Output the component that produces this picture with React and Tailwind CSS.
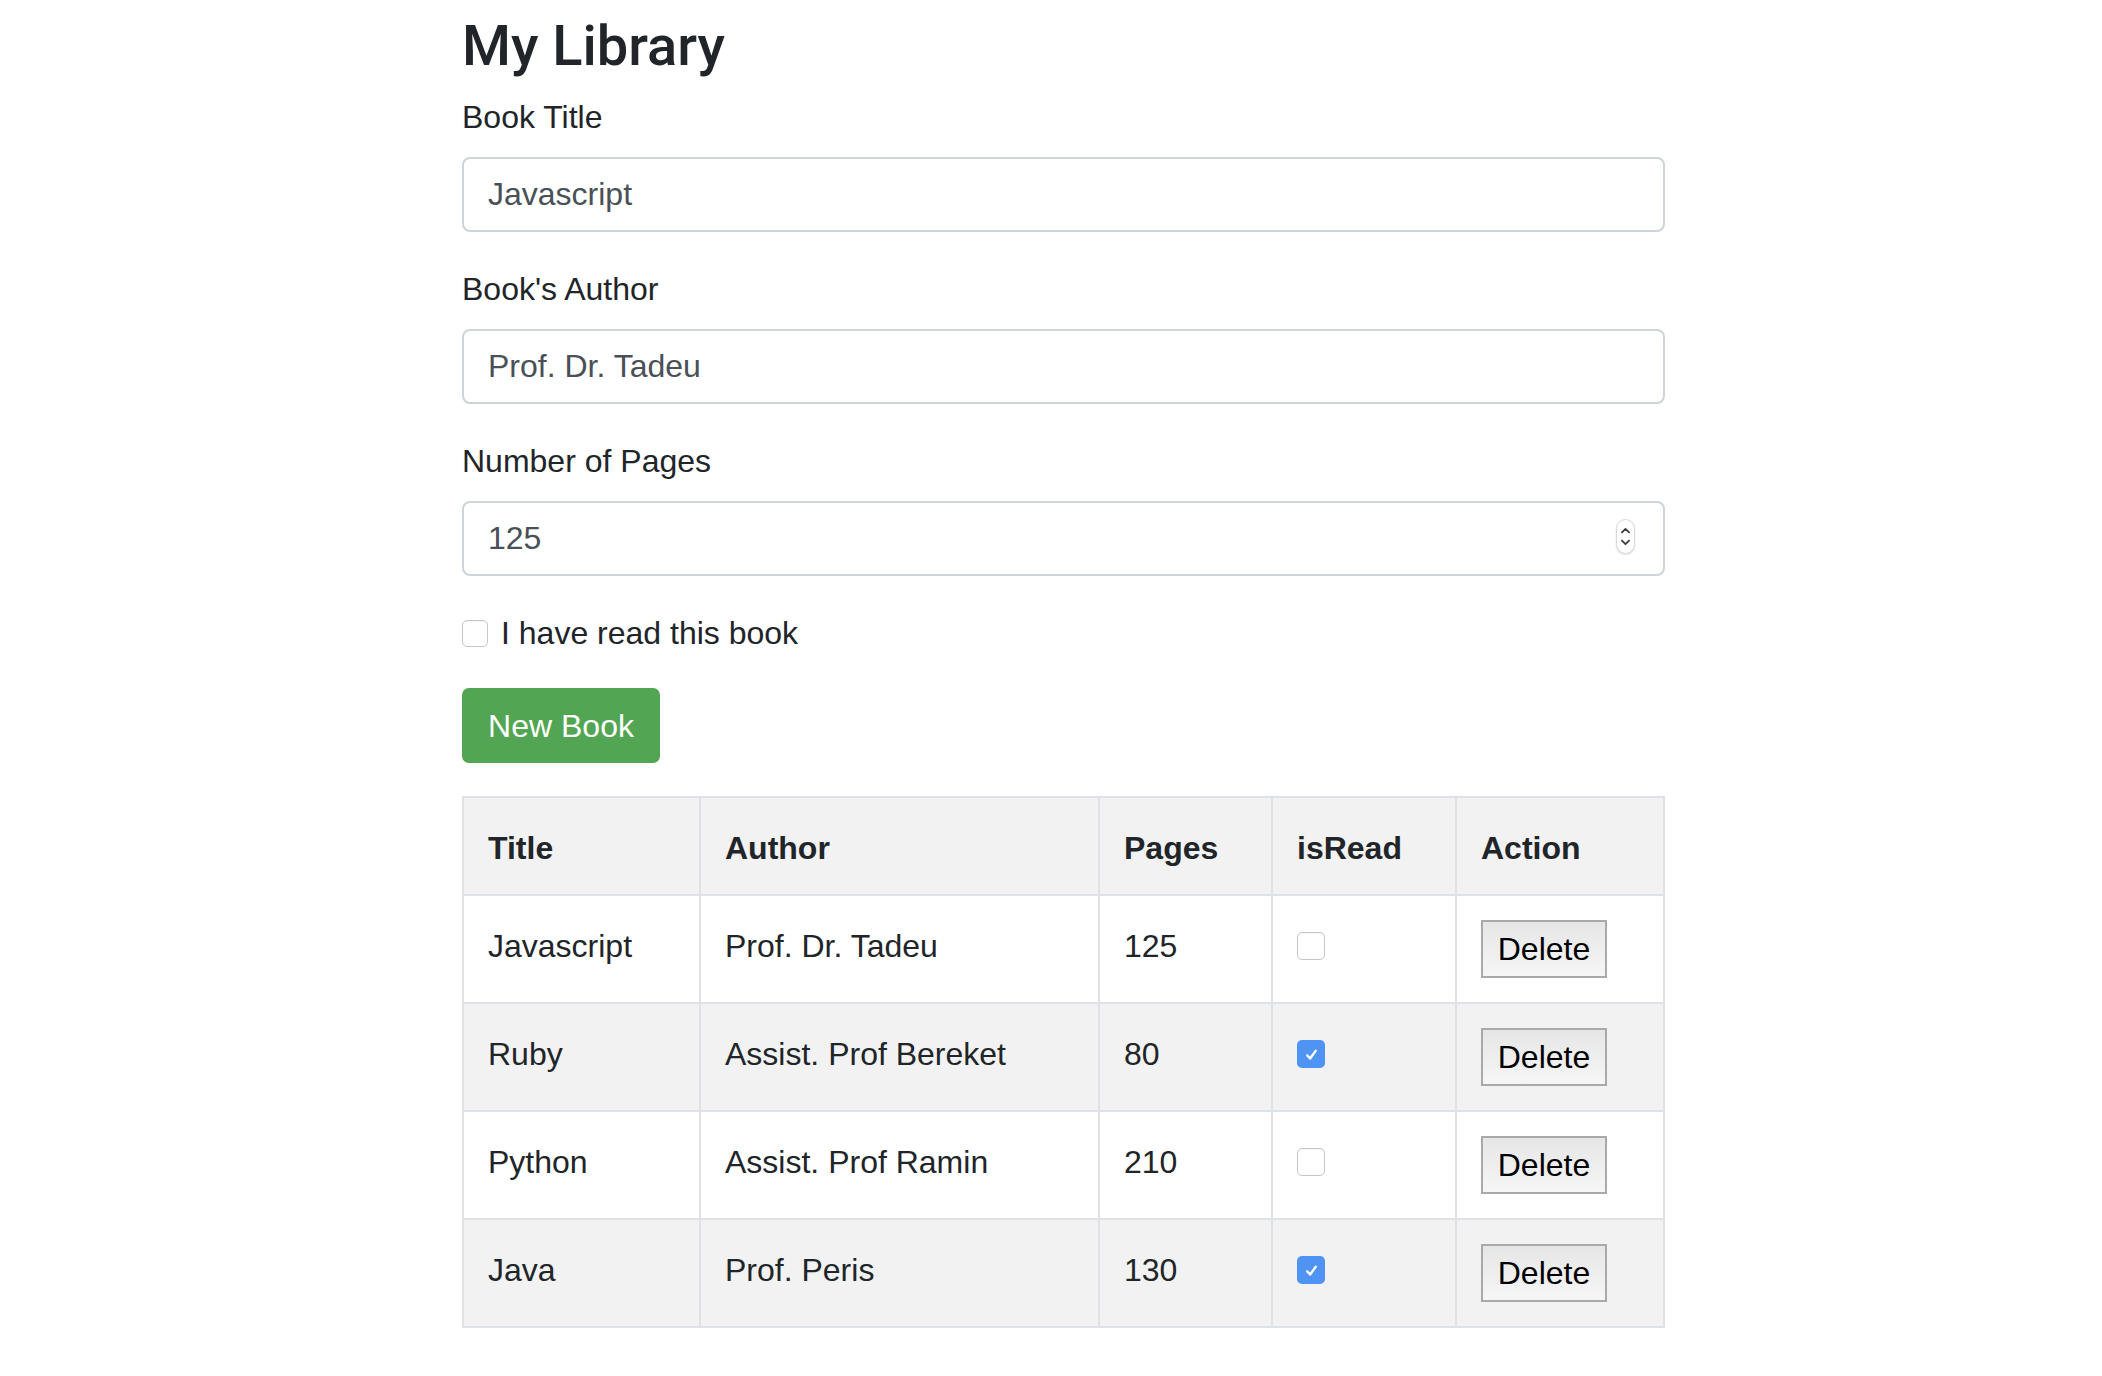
// Bibliothek: Formular für neue Bücher + Tabelle aller Bücher.
import React from 'react'

const BUECHER = [
  { titel: 'Javascript', autor: 'Prof. Dr. Tadeu', seiten: 125, gelesen: false },
  { titel: 'Ruby', autor: 'Assist. Prof Bereket', seiten: 80, gelesen: true },
  { titel: 'Python', autor: 'Assist. Prof Ramin', seiten: 210, gelesen: false },
  { titel: 'Java', autor: 'Prof. Peris', seiten: 130, gelesen: true },
]

const SPALTEN = ['Title', 'Author', 'Pages', 'isRead', 'Action']
const RASTER = 'grid grid-cols-[237px_399px_173px_184px_208px]'
const ZELLE = 'border-b-2 border-r-2 border-[#dee2e6] px-6'

function Haken({ an, groesse = 'h-[28px] w-[28px]' }) {
  if (an) {
    return (
      <span className={`flex items-center justify-center rounded-[5px] bg-[#4f94f4] ${groesse}`}>
        <svg viewBox="0 0 16 16" className="h-[17px] w-[17px]" fill="none" stroke="white" strokeWidth="2.2" strokeLinecap="round" strokeLinejoin="round">
          <path d="M4 8.8l2.7 3L12 4.5" />
        </svg>
      </span>
    )
  }
  return (
    <span
      className={`block rounded-[5px] border-[1.5px] border-[#c6c6c6] bg-white shadow-[inset_0_1px_1px_rgba(0,0,0,0.04)] ${groesse}`}
    />
  )
}

// nachgebauter Zahlen-Spinner (rechts im Seiten-Feld)
function Spinner() {
  return (
    <span className="absolute right-[30px] top-[18px] block h-[35px] w-[19px] rounded-full border border-[#dadada] bg-white shadow-[0_1px_2px_rgba(0,0,0,0.12)]">
      <svg viewBox="0 0 19 35" className="h-full w-full" fill="none" stroke="#3d3d3d" strokeWidth="2" strokeLinecap="round" strokeLinejoin="round">
        <path d="M5.5 13l4-4 4 4" />
        <path d="M5.5 22l4 4 4-4" />
      </svg>
    </span>
  )
}

function Feld({ label, wert, spinner }) {
  return (
    <div className="mb-[33px]">
      <label className="mb-4 block text-[32px] leading-[48px]">{label}</label>
      <div className="relative">
        <input
          readOnly
          value={wert}
          className="block h-[75px] w-full rounded-[8px] border-2 border-[#ced4da] bg-white px-6 text-[32px] text-[#495057] outline-none"
        />
        {spinner && <Spinner />}
      </div>
    </div>
  )
}

export default function App() {
  return (
    <div className="min-h-screen bg-white font-['Liberation_Sans',Arial,sans-serif] text-[#212529]">
      <div className="ml-[462px] w-[1203px] pt-[13px]">
        <h3 className="mb-[14px] font-['Roboto','Liberation_Sans',sans-serif] text-[56px] font-medium leading-[66px]">My Library</h3>

        <Feld label="Book Title" wert="Javascript" />
        <Feld label="Book's Author" wert="Prof. Dr. Tadeu" />
        <Feld label="Number of Pages" wert="125" spinner />

        <div className="mb-[31px] flex h-[48px] items-center gap-[13px]">
          <Haken an={false} groesse="h-[27px] w-[26px]" />
          <span className="text-[32px] leading-[48px]">I have read this book</span>
        </div>

        <button
          type="button"
          className="flex h-[75px] w-[198px] items-center justify-center rounded-[7px] bg-[#52a552] text-[32px] text-white"
        >
          New Book
        </button>

        {/* Tabelle */}
        <div className="mt-[33px] border-l-2 border-t-2 border-[#dee2e6] text-[32px]">
          <div className={`${RASTER} bg-[#f2f2f2] font-bold`}>
            {SPALTEN.map((s) => (
              <div key={s} className={`${ZELLE} h-[98px] pt-[26px] leading-[48px]`}>
                {s}
              </div>
            ))}
          </div>
          {BUECHER.map((b, i) => (
            <div key={b.titel} className={`${RASTER} ${i % 2 ? 'bg-[#f2f2f2]' : 'bg-white'}`}>
              <div className={`${ZELLE} h-[108px] pt-[26px] leading-[48px]`}>{b.titel}</div>
              <div className={`${ZELLE} h-[108px] pt-[26px] leading-[48px]`}>{b.autor}</div>
              <div className={`${ZELLE} h-[108px] pt-[26px] leading-[48px]`}>{b.seiten}</div>
              <div className={`${ZELLE} h-[108px] pt-[36px]`}>
                <Haken an={b.gelesen} />
              </div>
              <div className={`${ZELLE} h-[108px] pt-6`}>
                <button
                  type="button"
                  className="flex h-[58px] w-[126px] items-center justify-center border-2 border-[#a9a9a9] bg-gradient-to-b from-[#e6e6e6] to-[#f6f6f6] text-[32px] text-black"
                >
                  Delete
                </button>
              </div>
            </div>
          ))}
        </div>
      </div>
    </div>
  )
}
